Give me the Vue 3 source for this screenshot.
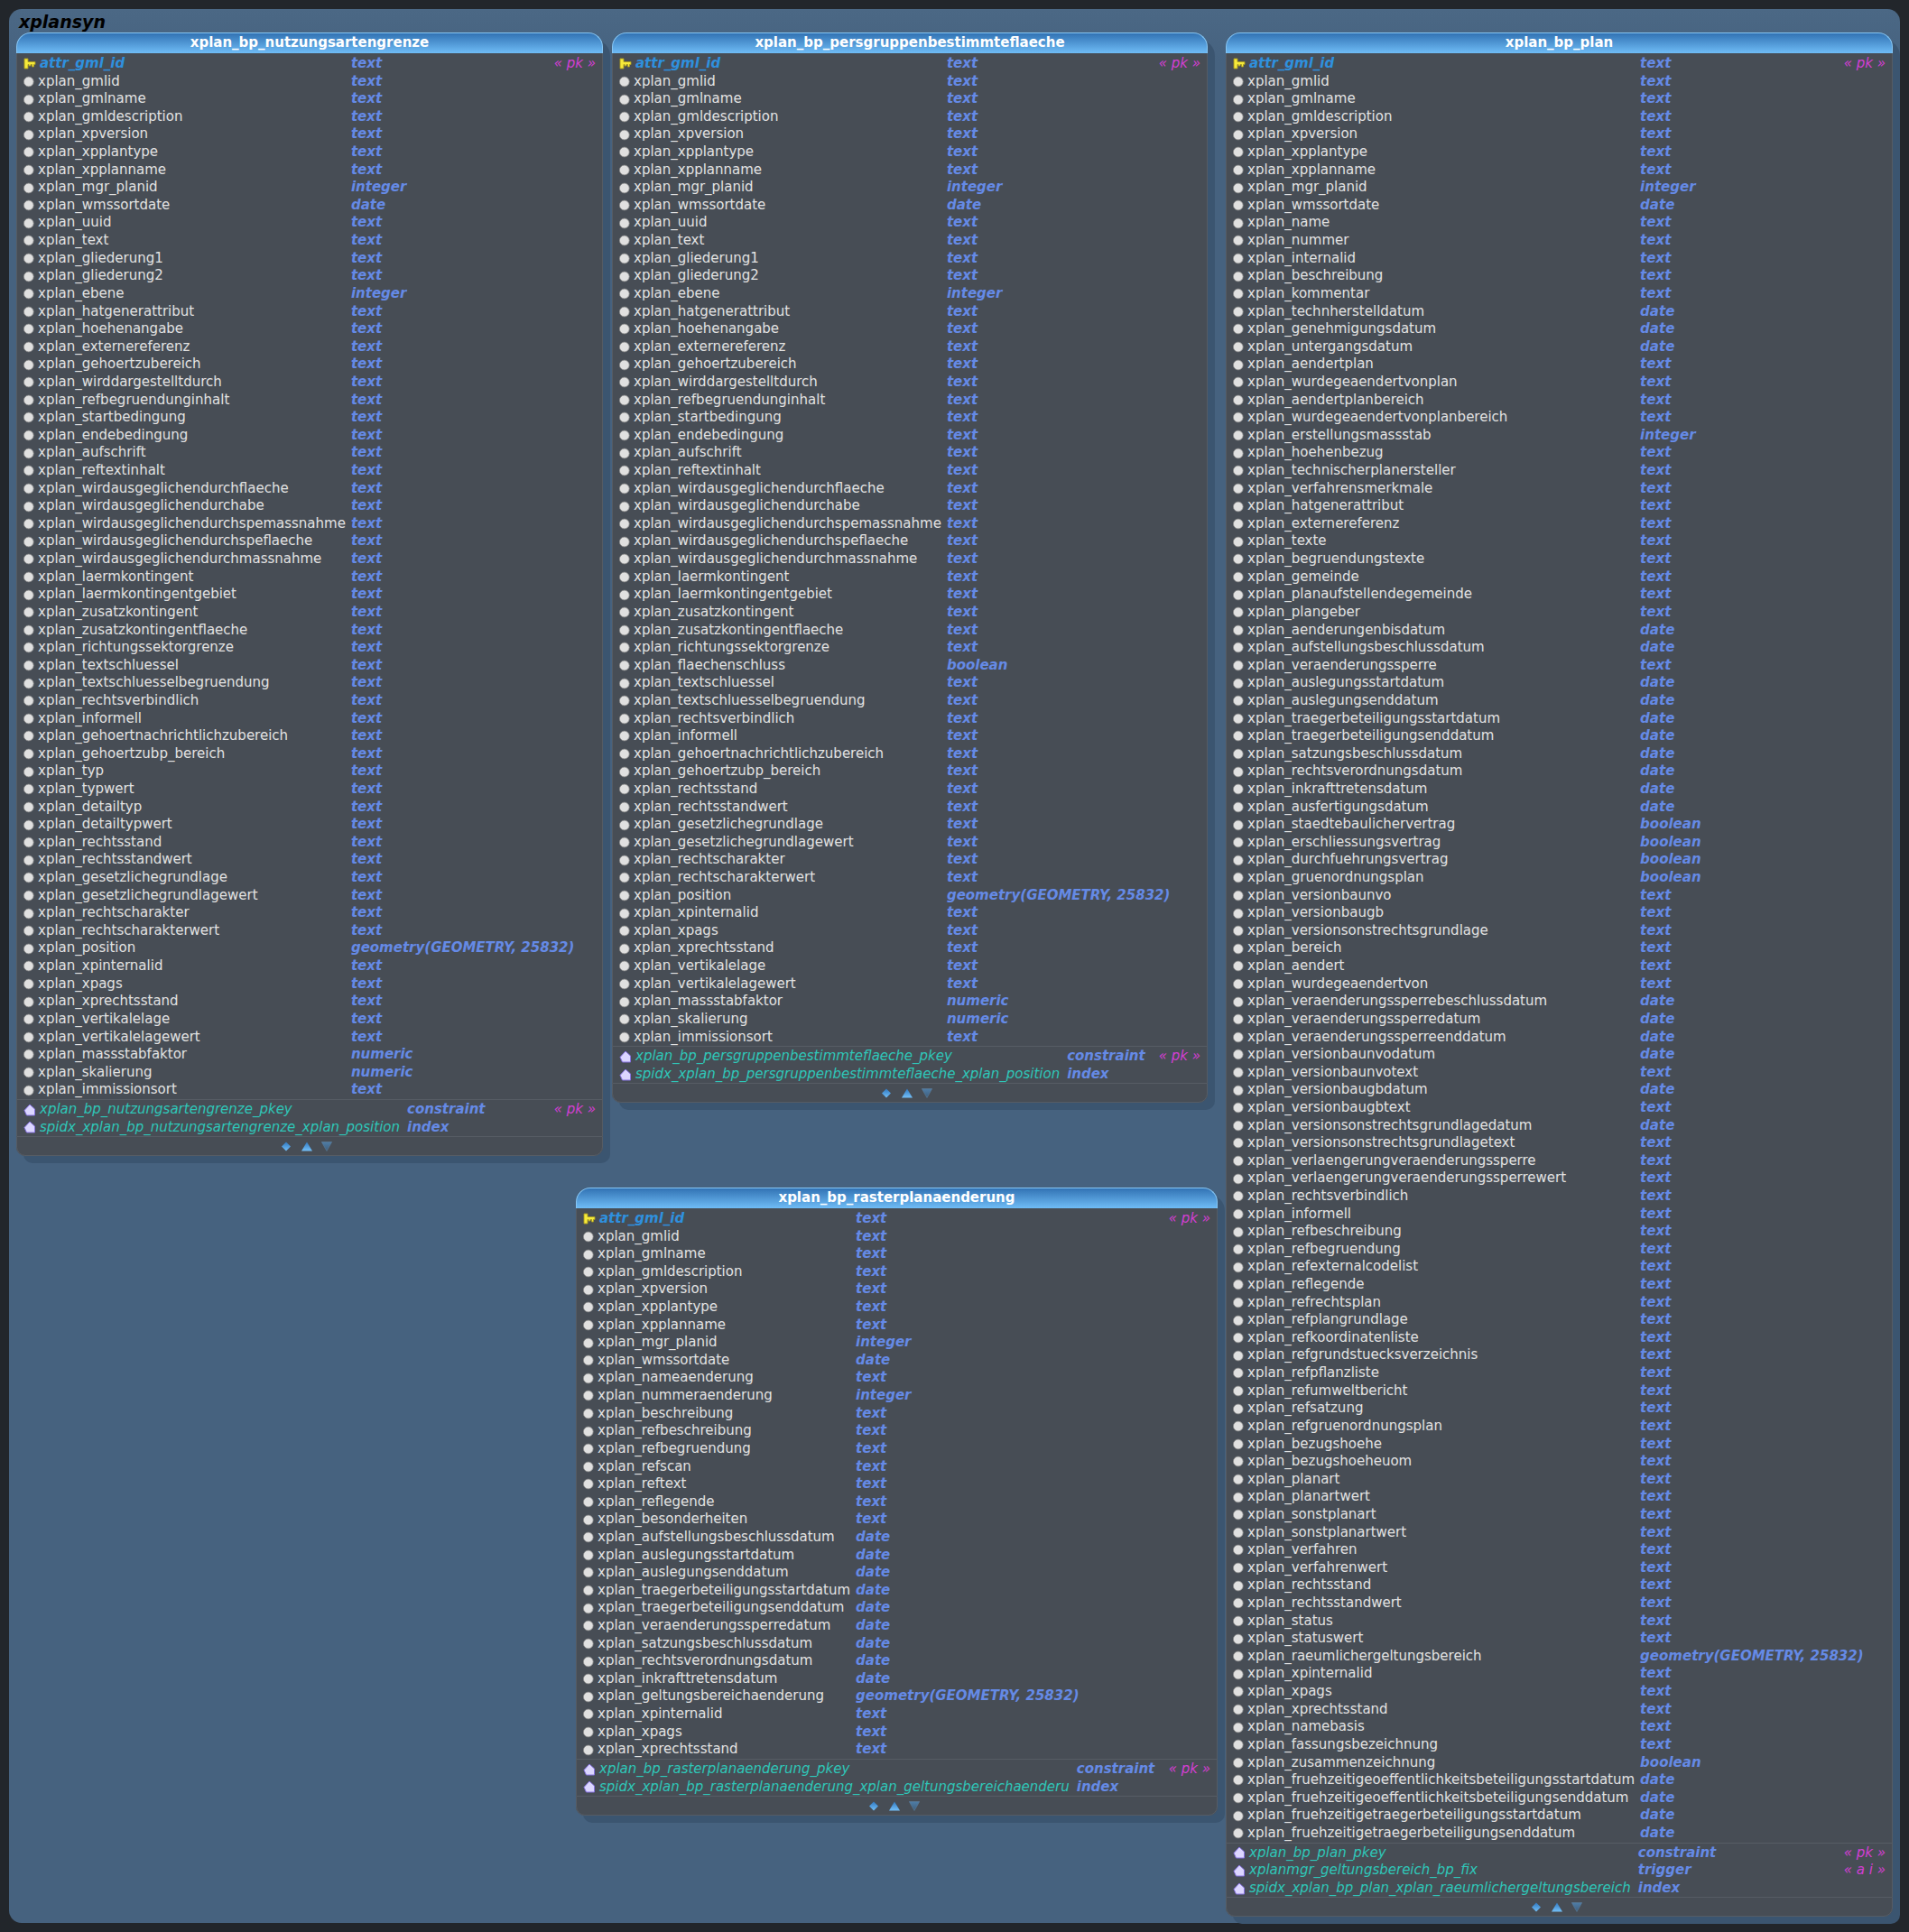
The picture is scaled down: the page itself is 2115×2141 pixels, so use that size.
<script setup>
const GEO = 'geometry(GEOMETRY, 25832)'

// spalten: "name" ist text, sonst "name:typ"
function spalten(text) {
  return text.trim().split(/\s+/).map((eintrag) => {
    const [name, typ] = eintrag.split(':')
    return { name: 'xplan_' + name, typ: typ === 'geo' ? GEO : typ || 'text' }
  })
}

const basis = `gmlid gmlname gmldescription xpversion xpplantype xpplanname mgr_planid:integer wmssortdate:date`

const teilA = `uuid text gliederung1 gliederung2 ebene:integer hatgenerattribut hoehenangabe externereferenz
  gehoertzubereich wirddargestelltdurch refbegruendunginhalt startbedingung endebedingung aufschrift reftextinhalt
  wirdausgeglichendurchflaeche wirdausgeglichendurchabe wirdausgeglichendurchspemassnahme
  wirdausgeglichendurchspeflaeche wirdausgeglichendurchmassnahme laermkontingent laermkontingentgebiet
  zusatzkontingent zusatzkontingentflaeche richtungssektorgrenze`

const teilB = `textschluessel textschluesselbegruendung rechtsverbindlich informell gehoertnachrichtlichzubereich gehoertzubp_bereich`

const teilC = `rechtsstand rechtsstandwert gesetzlichegrundlage gesetzlichegrundlagewert rechtscharakter rechtscharakterwert
  position:geo xpinternalid xpags xprechtsstand vertikalelage vertikalelagewert massstabfaktor:numeric skalierung:numeric immissionsort`

const tabellen = [
  {
    titel: 'xplan_bp_nutzungsartengrenze',
    x: 8, y: 26, breite: 650,
    attribute: spalten(`${basis} ${teilA} ${teilB} typ typwert detailtyp detailtypwert ${teilC}`),
    objekte: [
      { name: 'xplan_bp_nutzungsartengrenze_pkey', typ: 'constraint', flag: '« pk »' },
      { name: 'spidx_xplan_bp_nutzungsartengrenze_xplan_position', typ: 'index' }
    ]
  },
  {
    titel: 'xplan_bp_persgruppenbestimmteflaeche',
    x: 668, y: 26, breite: 660,
    attribute: spalten(`${basis} ${teilA} flaechenschluss:boolean ${teilB} ${teilC}`),
    objekte: [
      { name: 'xplan_bp_persgruppenbestimmteflaeche_pkey', typ: 'constraint', flag: '« pk »' },
      { name: 'spidx_xplan_bp_persgruppenbestimmteflaeche_xplan_position', typ: 'index' }
    ]
  },
  {
    titel: 'xplan_bp_plan',
    x: 1348, y: 26, breite: 739,
    attribute: spalten(`${basis} name nummer internalid beschreibung kommentar technherstelldatum:date genehmigungsdatum:date
      untergangsdatum:date aendertplan wurdegeaendertvonplan aendertplanbereich wurdegeaendertvonplanbereich
      erstellungsmassstab:integer hoehenbezug technischerplanersteller verfahrensmerkmale hatgenerattribut externereferenz
      texte begruendungstexte gemeinde planaufstellendegemeinde plangeber aenderungenbisdatum:date
      aufstellungsbeschlussdatum:date veraenderungssperre auslegungsstartdatum:date auslegungsenddatum:date
      traegerbeteiligungsstartdatum:date traegerbeteiligungsenddatum:date satzungsbeschlussdatum:date
      rechtsverordnungsdatum:date inkrafttretensdatum:date ausfertigungsdatum:date staedtebaulichervertrag:boolean
      erschliessungsvertrag:boolean durchfuehrungsvertrag:boolean gruenordnungsplan:boolean versionbaunvo versionbaugb
      versionsonstrechtsgrundlage bereich aendert wurdegeaendertvon veraenderungssperrebeschlussdatum:date
      veraenderungssperredatum:date veraenderungssperreenddatum:date versionbaunvodatum:date versionbaunvotext
      versionbaugbdatum:date versionbaugbtext versionsonstrechtsgrundlagedatum:date versionsonstrechtsgrundlagetext
      verlaengerungveraenderungssperre verlaengerungveraenderungssperrewert rechtsverbindlich informell refbeschreibung
      refbegruendung refexternalcodelist reflegende refrechtsplan refplangrundlage refkoordinatenliste
      refgrundstuecksverzeichnis refpflanzliste refumweltbericht refsatzung refgruenordnungsplan bezugshoehe bezugshoeheuom
      planart planartwert sonstplanart sonstplanartwert verfahren verfahrenwert rechtsstand rechtsstandwert status statuswert
      raeumlichergeltungsbereich:geo xpinternalid xpags xprechtsstand namebasis fassungsbezeichnung zusammenzeichnung:boolean
      fruehzeitigeoeffentlichkeitsbeteiligungsstartdatum:date fruehzeitigeoeffentlichkeitsbeteiligungsenddatum:date
      fruehzeitigetraegerbeteiligungsstartdatum:date fruehzeitigetraegerbeteiligungsenddatum:date`),
    objekte: [
      { name: 'xplan_bp_plan_pkey', typ: 'constraint', flag: '« pk »' },
      { name: 'xplanmgr_geltungsbereich_bp_fix', typ: 'trigger', flag: '« a i »' },
      { name: 'spidx_xplan_bp_plan_xplan_raeumlichergeltungsbereich', typ: 'index' }
    ]
  },
  {
    titel: 'xplan_bp_rasterplanaenderung',
    x: 628, y: 1306, breite: 711,
    attribute: spalten(`${basis} nameaenderung nummeraenderung:integer beschreibung refbeschreibung refbegruendung refscan reftext
      reflegende besonderheiten aufstellungsbeschlussdatum:date auslegungsstartdatum:date auslegungsenddatum:date
      traegerbeteiligungsstartdatum:date traegerbeteiligungsenddatum:date veraenderungssperredatum:date
      satzungsbeschlussdatum:date rechtsverordnungsdatum:date inkrafttretensdatum:date geltungsbereichaenderung:geo
      xpinternalid xpags xprechtsstand`),
    objekte: [
      { name: 'xplan_bp_rasterplanaenderung_pkey', typ: 'constraint', flag: '« pk »' },
      { name: 'spidx_xplan_bp_rasterplanaenderung_xplan_geltungsbereichaenderu', typ: 'index' }
    ]
  }
]

function platz(t) {
  return { left: t.x + 'px', top: t.y + 'px', width: t.breite + 'px' }
}
</script>

<template>
  <div class="seite">
    <div class="schema">
      <svg class="defs" width="0" height="0" aria-hidden="true">
        <defs>
          <linearGradient id="blau" x1="0" y1="0" x2="0" y2="1">
            <stop offset="0" stop-color="#2f78c0" />
            <stop offset="1" stop-color="#74c0f8" />
          </linearGradient>
          <linearGradient id="blauDunkel" x1="0" y1="0" x2="0" y2="1">
            <stop offset="0" stop-color="#4f7da6" />
            <stop offset="1" stop-color="#3d5d7c" />
          </linearGradient>
        </defs>
      </svg>

      <div class="schema-titel">xplansyn</div>

      <div v-for="t in tabellen" :key="t.titel" class="tabelle" :style="platz(t)">
        <div class="kopf">{{ t.titel }}</div>

        <div class="zeilen">
          <div class="zeile">
            <span class="icon">
              <svg width="14" height="13" viewBox="0 0 14 13">
                <path d="M1 1h4v3.500h8v3h-1.500v2.500H9.500V7.500H8v1.500H6V7.500H5V12H1z" fill="#f6ea3a" stroke="#a89a22" stroke-width=".9" />
              </svg>
            </span>
            <span class="pk-name">attr_gml_id</span>
            <span class="typ-zelle"><span class="typ">text</span><span class="flag">« pk »</span></span>
          </div>
          <div v-for="a in t.attribute" :key="a.name" class="zeile">
            <span class="icon">
              <svg width="13" height="13" viewBox="0 0 13 13">
                <circle cx="5.800" cy="6.500" r="5.400" fill="#e0e0e0" stroke="#8a8a8a" stroke-width=".8" />
              </svg>
            </span>
            <span class="name">{{ a.name }}</span>
            <span class="typ-zelle"><span class="typ">{{ a.typ }}</span></span>
          </div>
        </div>

        <div class="zeilen objekte">
          <div v-for="o in t.objekte" :key="o.name" class="zeile">
            <span class="icon">
              <svg width="14" height="14" viewBox="0 0 14 14">
                <path d="M7 1 12.500 6v7H3.500L1 7.500z" fill="#dcd6ff" stroke="#8672e0" stroke-width="1" />
              </svg>
            </span>
            <span class="objekt-name">{{ o.name }}</span>
            <span class="typ-zelle"><span class="typ">{{ o.typ }}</span><span v-if="o.flag" class="flag">{{ o.flag }}</span></span>
          </div>
        </div>

        <div class="fuss">
          <svg class="raute" width="10" height="11" viewBox="0 0 10 11">
            <path d="M5 .5 10 5.500 5 10.500 0 5.500z" fill="url(#blau)" />
          </svg>
          <svg width="12" height="11" viewBox="0 0 12 11">
            <path d="M6 .5 12 10.500H0z" fill="url(#blau)" />
          </svg>
          <svg width="12" height="11" viewBox="0 0 12 11">
            <path d="M.3 .5H11.700L6 10.500z" fill="url(#blauDunkel)" stroke="#5d7e9c" stroke-width=".6" />
          </svg>
        </div>
      </div>
    </div>
  </div>
</template>

<style>
body {
  background: #22262b;
}
</style>

<style scoped>
.seite {
  width: 2115px;
  height: 2141px;
  padding: 10px;
  box-sizing: border-box;
  font-family: "DejaVu Sans", sans-serif;
  font-size: 15px;
  background: #22262b;
}

.schema {
  position: relative;
  width: 2095px;
  height: 2121px;
  border-radius: 14px;
  background: linear-gradient(#4b6885, #46627f 60px);
}

.defs {
  position: absolute;
}

.schema-titel {
  padding: 2px 0 0 11px;
  color: #000;
  font-size: 19px;
  font-weight: bold;
  font-style: italic;
  line-height: 24px;
}

.tabelle {
  position: absolute;
  box-sizing: border-box;
  border-radius: 18px 18px 10px 10px;
  background: #474d55;
  box-shadow: 8px 8px 0 #3b5570;
}

.kopf {
  height: 23px;
  box-sizing: border-box;
  border: 1px solid #86c6f4;
  border-bottom: none;
  border-radius: 16px 16px 0 0;
  background: linear-gradient(#3273b4, #6fbcf6);
  color: #fff;
  font-weight: bold;
  line-height: 21px;
  text-align: center;
}

.zeilen {
  display: grid;
  grid-template-columns: 16px max-content 1fr;
  grid-auto-rows: 19.61px;
  column-gap: 0;
  padding: 2px 7px 0 7px;
  border-left: 1px solid #555b63;
  border-right: 1px solid #555b63;
}

.zeile {
  display: contents;
}

.zeile > span {
  line-height: 19.61px;
  white-space: nowrap;
}

.objekte {
  border-top: 1px solid #565c64;
  padding-top: 1px;
}

.icon {
  display: flex;
  align-items: center;
}

.name {
  color: #e2e2e2;
  padding-right: 6px;
}

.pk-name {
  color: #2f90de;
  font-weight: bold;
  font-style: italic;
  padding: 0 6px 0 2px;
}

.objekt-name {
  color: #2fc6b8;
  font-style: italic;
  padding: 0 8px 0 2px;
}

.typ-zelle {
  display: flex;
  justify-content: space-between;
}

.typ {
  color: #658ae6;
  font-weight: bold;
  font-style: italic;
}

.flag {
  color: #d23fd2;
  font-style: italic;
}

.fuss {
  display: flex;
  align-items: center;
  justify-content: center;
  gap: 10px;
  height: 20px;
  padding-right: 6px;
  border: 1px solid #565c64;
  border-radius: 0 0 10px 10px;
}

.raute {
  margin-right: 2px;
}
</style>
